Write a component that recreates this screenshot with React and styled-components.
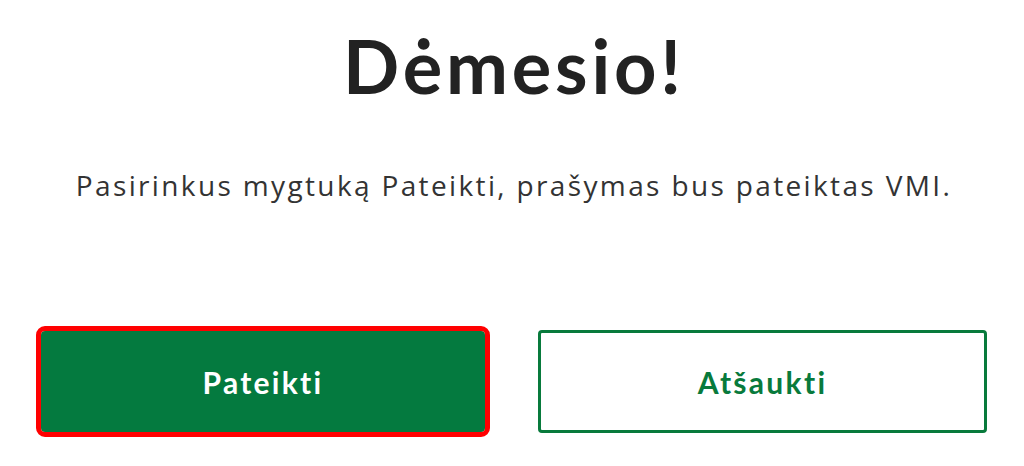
import React from "react";
import styled, { createGlobalStyle } from "styled-components";

const Global = createGlobalStyle`
  html, body { margin: 0; padding: 0; background: #ffffff; }
  body { font-family: "Open Sans", "Noto Sans", sans-serif; }
`;

const Dialog = styled.div`
  width: 1024px;
  height: 466px;
  box-sizing: border-box;
  padding: 22px 37px 0 41px;
  display: flex;
  flex-direction: column;
  align-items: center;
`;

const Title = styled.h1`
  margin: 0;
  font-family: "Lato", "Open Sans", sans-serif;
  font-weight: 700;
  font-size: 74px;
  line-height: 88px;
  color: #222222;
  letter-spacing: 3.8px;
`;

const Message = styled.p`
  margin: 57px 0 0 0;
  font-family: "Open Sans", "Noto Sans", sans-serif;
  font-size: 28px;
  line-height: 36px;
  color: #333333;
  letter-spacing: 2.36px;
  white-space: nowrap;
`;

const Actions = styled.div`
  margin-top: 127px;
  align-self: stretch;
  display: flex;
  align-items: center;
  justify-content: space-between;
`;

const Button = styled.button`
  box-sizing: border-box;
  font-family: "Lato", "Open Sans", sans-serif;
  font-weight: 700;
  font-size: 30px;
  letter-spacing: 2.3px;
  border-radius: 4px;
  cursor: pointer;
  display: flex;
  align-items: center;
  justify-content: center;
  padding: 0;
  width: ${(p) => (p.$primary ? "444px" : "449px")};
  height: ${(p) => (p.$primary ? "101px" : "103px")};
  border: ${(p) => (p.$primary ? "none" : "3px solid #087a3c")};
  background: ${(p) => (p.$primary ? "#047a3f" : "#ffffff")};
  color: ${(p) => (p.$primary ? "#ffffff" : "#087a3c")};
  outline: ${(p) => (p.$focused ? "5px solid #ff0000" : "none")};
  outline-offset: 0;
`;

export default function App() {
  return (
    <>
      <Global />
      <Dialog>
        <Title>Dėmesio!</Title>
        <Message>Pasirinkus mygtuką Pateikti, prašymas bus pateiktas VMI.</Message>
        <Actions>
          <Button $primary $focused>Pateikti</Button>
          <Button>Atšaukti</Button>
        </Actions>
      </Dialog>
    </>
  );
}
